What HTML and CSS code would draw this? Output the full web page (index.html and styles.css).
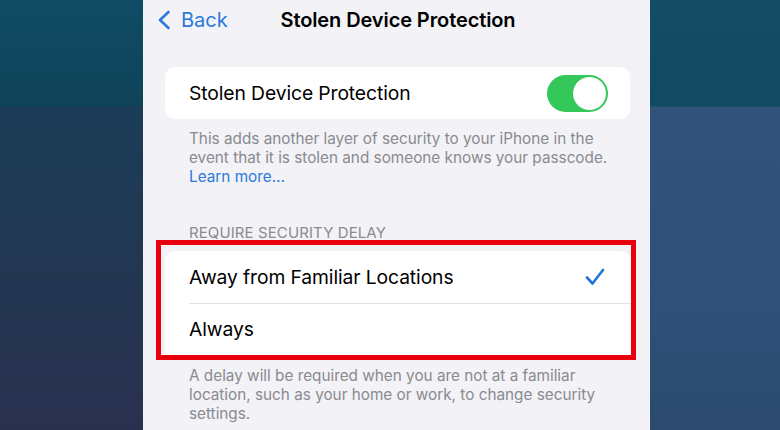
FILE: index.html
```html
<!DOCTYPE html>
<html lang="en">
<head>
<meta charset="utf-8">
<title>Stolen Device Protection</title>
<link rel="stylesheet" href="styles.css">
</head>
<body>
<div class="stage">
  <div class="side side-left"></div>
  <main class="screen">
    <header class="nav">
      <a class="back" href="#">
        <svg class="chevron" width="14" height="20" viewBox="0 0 14 20" aria-hidden="true">
          <path d="M11.5 2 L3 10 L11.5 18" fill="none" stroke="currentColor" stroke-width="2.6" stroke-linecap="round" stroke-linejoin="round"/>
        </svg>
        <span>Back</span>
      </a>
      <h1 class="title">Stolen Device Protection</h1>
      <span></span>
    </header>

    <section class="group first">
      <div class="card">
        <div class="row">
          <span class="label">Stolen Device Protection</span>
          <span class="toggle on"><span class="knob"></span></span>
        </div>
      </div>
      <p class="footnote">This adds another layer of security to your iPhone in the event that it is stolen and someone knows your passcode. <a href="#" class="link">Learn more…</a></p>
    </section>

    <section class="group">
      <h2 class="section-head">REQUIRE SECURITY DELAY</h2>
      <div class="highlight">
        <div class="card">
          <div class="row">
            <span class="label">Away from Familiar Locations</span>
            <svg class="check" width="20" height="18" viewBox="0 0 20 18" aria-hidden="true">
              <path d="M2 9.5 L7.5 15.5 L18 2" fill="none" stroke="currentColor" stroke-width="2.6" stroke-linecap="round" stroke-linejoin="round"/>
            </svg>
          </div>
          <div class="row">
            <span class="label">Always</span>
          </div>
        </div>
      </div>
      <p class="footnote">A delay will be required when you are not at a familiar location, such as your home or work, to change security settings.</p>
    </section>
  </main>
  <div class="side side-right"></div>
</div>
</body>
</html>
```

FILE: styles.css
```css
* {
  box-sizing: border-box;
}

html, body {
  margin: 0;
  padding: 0;
  height: 100%;
}

body {
  font-family: Inter, "Liberation Sans", sans-serif;
  overflow: hidden;
}

.stage {
  display: flex;
  width: 780px;
  height: 430px;
}

.side {
  height: 100%;
}

.side-left {
  width: 143px;
  background: linear-gradient(to bottom,
    #0f4c65 0px, #0f4359 106px,
    #1a3c57 107px, #223852 250px, #2a3150 430px);
}

.side-right {
  flex: 1;
  background: linear-gradient(to bottom,
    #134c66 0px, #124a64 106px,
    #30527b 107px, #2f5079 300px, #2b4a6e 430px);
}

.screen {
  width: 507px;
  height: 100%;
  background: #f2f2f7;
  padding: 0 20px 0 22px;
  overflow: hidden;
}

/* navigation bar */
.nav {
  display: grid;
  grid-template-columns: 1fr auto 1fr;
  align-items: center;
  height: 40px;
  margin: 0 -20px 0 -22px;
  padding: 0 11px 0 14px;
}

.back {
  display: flex;
  align-items: center;
  gap: 10px;
  color: #2b7ad9;
  text-decoration: none;
  font-size: 20px;
}

.chevron {
  display: block;
}

.title {
  margin: 0;
  font-size: 20px;
  font-weight: 600;
  color: #000;
  letter-spacing: -0.1px;
}

/* grouped list */
.group.first {
  margin-top: 27px;
}

.card {
  background: #fff;
  border-radius: 10px;
  overflow: hidden;
}

.row {
  display: flex;
  align-items: center;
  justify-content: space-between;
  height: 52px;
  padding: 0 22px 0 24px;
  position: relative;
}

.row + .row::before {
  content: "";
  position: absolute;
  top: 0;
  left: 24px;
  right: 0;
  height: 1px;
  background: #e2e2e6;
}

.label {
  font-size: 19.3px;
  color: #000;
  letter-spacing: -0.1px;
}

.toggle {
  width: 61px;
  height: 37px;
  border-radius: 19px;
  background: #34c759;
  padding: 2px;
  display: flex;
  justify-content: flex-end;
}

.knob {
  width: 33px;
  height: 33px;
  border-radius: 50%;
  background: #fff;
}

.check {
  color: #1f76d8;
  margin-right: 4px;
}

.footnote {
  margin: 10px 0 0;
  padding: 0 14px 0 24px;
  font-size: 15.3px;
  line-height: 19px;
  color: #8a8a8f;
}

.link {
  color: #2b7ad9;
  text-decoration: none;
}

.section-head {
  margin: 38px 0 0;
  padding-left: 24px;
  font-size: 15px;
  font-weight: 400;
  line-height: 18px;
  color: #8a8a8f;
  letter-spacing: 0.1px;
}

/* red outline drawn around the delay options */
.highlight {
  margin: -2px -6px 0 -9px;
  border: 5px solid #e8000c;
  padding: 6px 0 0 4px;
  height: 120px;
  overflow: hidden;
}

.highlight .card {
  border-radius: 10px 10px 0 0;
}

.highlight + .footnote {
  margin-top: 6px;
}
```
